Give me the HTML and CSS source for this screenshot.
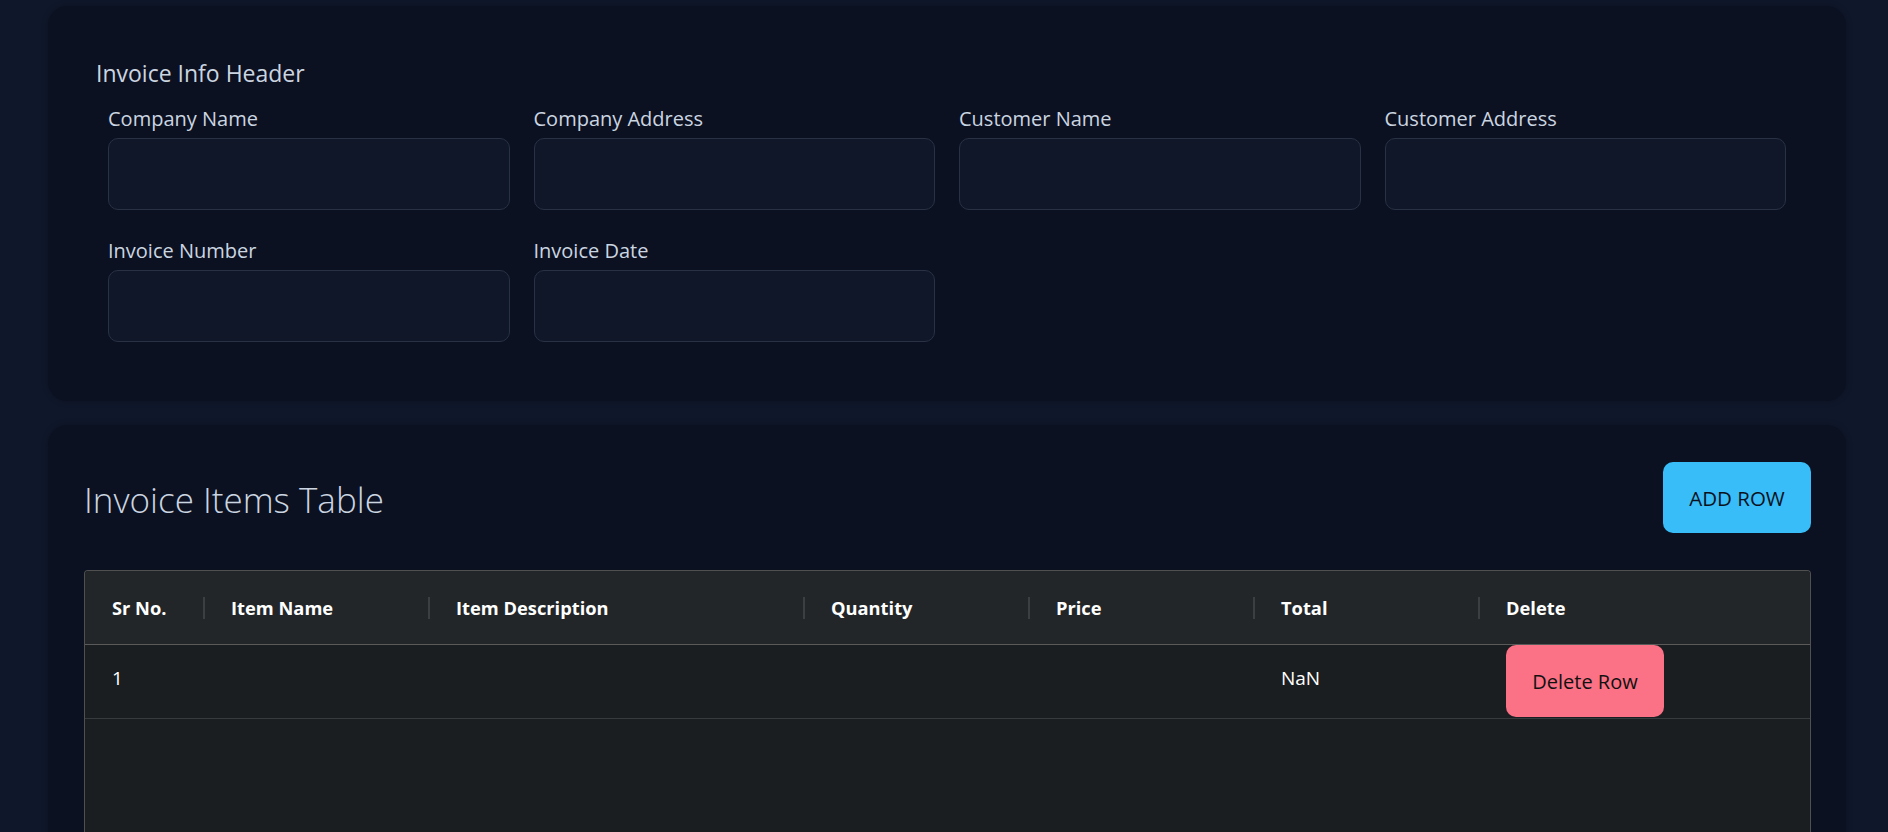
FILE: index.html
```html
<!DOCTYPE html>
<html lang="en">
<head>
<meta charset="utf-8">
<title>Invoice</title>
<link rel="stylesheet" href="styles.css">
</head>
<body>
<main class="page">
  <section class="card info-card">
    <h2 class="info-title">Invoice Info Header</h2>
    <div class="form-grid">
      <div class="field"><label class="field-label">Company Name</label><input class="field-input" type="text"></div>
      <div class="field"><label class="field-label">Company Address</label><input class="field-input" type="text"></div>
      <div class="field"><label class="field-label">Customer Name</label><input class="field-input" type="text"></div>
      <div class="field"><label class="field-label">Customer Address</label><input class="field-input" type="text"></div>
      <div class="field"><label class="field-label">Invoice Number</label><input class="field-input" type="text"></div>
      <div class="field"><label class="field-label">Invoice Date</label><input class="field-input" type="text"></div>
    </div>
  </section>

  <section class="card items-card">
    <div class="items-head">
      <h1 class="items-title">Invoice Items Table</h1>
      <button class="btn btn-add" type="button">ADD ROW</button>
    </div>
    <div class="data-grid">
      <div class="grid-header">
        <div class="hcell first"><span class="hlabel">Sr No.</span></div>
        <div class="hcell"><span class="sep"></span><span class="hlabel">Item Name</span></div>
        <div class="hcell"><span class="sep"></span><span class="hlabel">Item Description</span></div>
        <div class="hcell"><span class="sep"></span><span class="hlabel">Quantity</span></div>
        <div class="hcell"><span class="sep"></span><span class="hlabel">Price</span></div>
        <div class="hcell"><span class="sep"></span><span class="hlabel">Total</span></div>
        <div class="hcell"><span class="sep"></span><span class="hlabel">Delete</span></div>
      </div>
      <div class="grid-row">
        <div class="cell first">1</div>
        <div class="cell"></div>
        <div class="cell"></div>
        <div class="cell"></div>
        <div class="cell"></div>
        <div class="cell">NaN</div>
        <div class="cell cell-btn"><button class="btn btn-delete" type="button">Delete Row</button></div>
      </div>
      <div class="grid-fill"></div>
    </div>
  </section>
</main>
</body>
</html>
```

FILE: styles.css
```css
* { box-sizing: border-box; }

html, body {
  margin: 0;
  padding: 0;
  background: #0f172a;
  font-family: "Open Sans", "Noto Sans", "Liberation Sans", sans-serif;
  color: #cbd5e1;
}

.page {
  padding: 6px 42px 40px 48px;
  display: flex;
  flex-direction: column;
  gap: 24px;
}

.card {
  background: #0b1120;
  border-radius: 20px;
  box-shadow: 0 0 6px rgba(0, 0, 0, 0.25);
}

/* ---------- Info card ---------- */
.info-card {
  padding: 48px 48px 59px 48px;
}

.info-title {
  margin: 0 0 13px 0;
  font-size: 23px;
  font-weight: 400;
  line-height: 38px;
  color: #cbd5e1;
}

.form-grid {
  display: grid;
  grid-template-columns: repeat(4, 1fr);
  column-gap: 24px;
  row-gap: 27px;
  padding: 0 12px;
}

.field {
  display: flex;
  flex-direction: column;
}

.field-label {
  font-size: 20px;
  line-height: 28px;
  margin-bottom: 5px;
  color: #cbd5e1;
}

.field-input {
  height: 72px;
  width: 100%;
  background: #0f1729;
  border: 1px solid #283244;
  border-radius: 10px;
  color: #e2e8f0;
  font: inherit;
  padding: 0 16px;
}

/* ---------- Items card ---------- */
.items-card {
  padding: 37px 35px 40px 36px;
}

.items-head {
  display: flex;
  align-items: center;
  justify-content: space-between;
  margin-bottom: 37px;
}

.items-title {
  margin: 0;
  font-size: 35px;
  font-weight: 300;
  line-height: 44px;
  color: #cbd5e1;
  padding-top: 4px;
}

.btn {
  border: none;
  font-family: inherit;
  cursor: pointer;
}

.btn-add {
  width: 148px;
  height: 71px;
  background: #38bdf8;
  color: #0b1120;
  border-radius: 10px;
  font-size: 20.5px;
}

.data-grid {
  border: 1px solid #505050;
  border-bottom: none;
  border-radius: 4px 4px 0 0;
  background: #1b1e21;
  min-height: 420px;
  display: flex;
  flex-direction: column;
  overflow: hidden;
}

.grid-header,
.grid-row {
  display: grid;
  grid-template-columns: 118px 225px 375px 225px 225px 225px 1fr;
}

.grid-header {
  background: #232629;
  height: 74px;
  border-bottom: 1px solid #5a5a5a;
}

.hcell {
  display: flex;
  align-items: center;
  color: #ffffff;
  font-weight: 700;
  font-size: 18.3px;
}

.hcell.first { padding-left: 27px; }

.sep {
  width: 2px;
  height: 22px;
  background: #3c3f42;
  margin-right: 26px;
  flex: none;
}

.grid-row {
  height: 74px;
  border-bottom: 1px solid #383b3e;
}

.cell {
  display: flex;
  align-items: center;
  padding-left: 28px;
  padding-bottom: 8px;
  color: #ffffff;
  font-size: 19px;
}

.cell.first { padding-left: 27px; }

.cell-btn {
  align-items: flex-start;
  padding-bottom: 0;
}

.btn-delete {
  width: 158px;
  height: 72px;
  background: #fb7185;
  color: #111111;
  border-radius: 10px;
  font-size: 20px;
}

.grid-fill {
  flex: 1;
}
```
